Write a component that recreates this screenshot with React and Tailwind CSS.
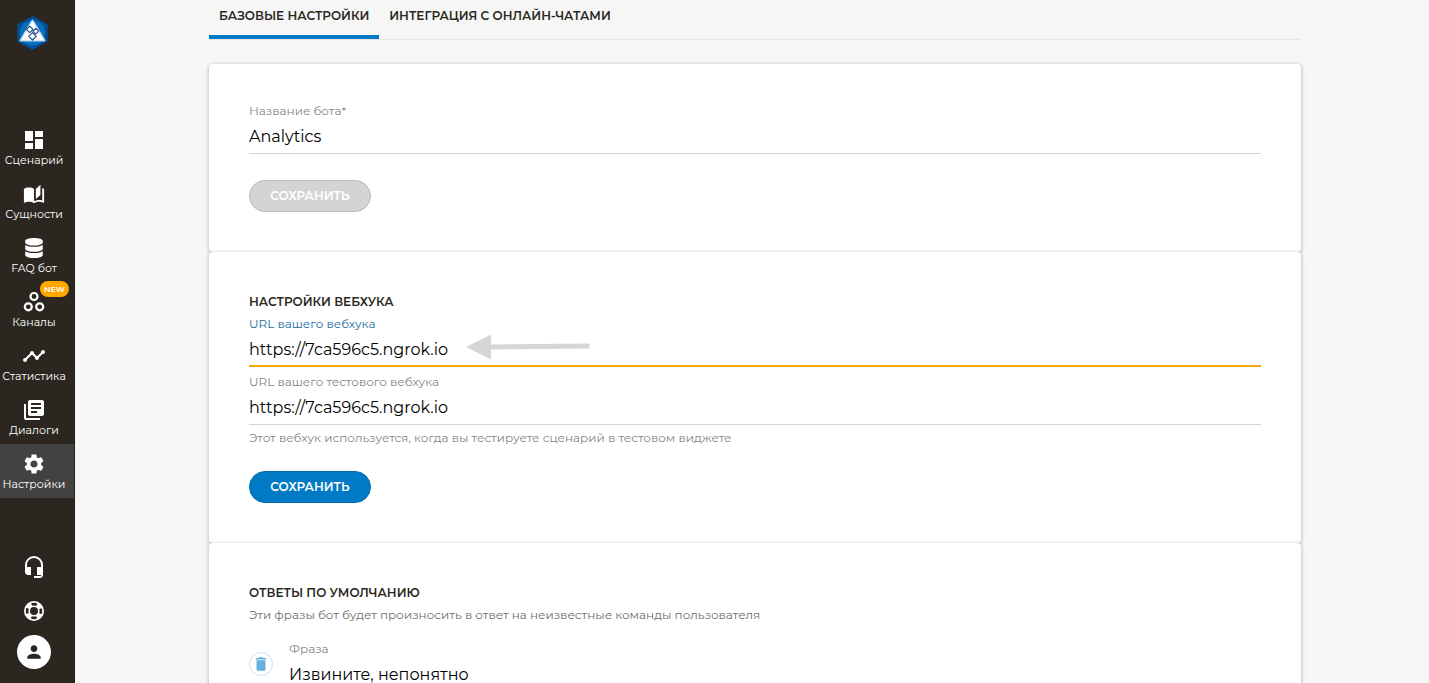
import React, { useState } from 'react'
import { FaDatabase } from 'react-icons/fa'
import {
  MdDashboard,
  MdDelete,
  MdHeadsetMic,
  MdLibraryBooks,
  MdPerson,
  MdSettings,
  MdTimeline
} from 'react-icons/md'

const BookIcon = () => (
  <svg viewBox="0 0 24 24" className="size-[22px]" fill="currentColor" aria-hidden="true">
    <path d="M19 2L14 6.5V17.5L19 13V2M6.5 5C4.55 5 2.45 5.4 1 6.5V21.16C1 21.41 1.25 21.66 1.5 21.66C1.6 21.66 1.65 21.59 1.75 21.59C3.1 20.94 5.05 20.5 6.5 20.5C8.45 20.5 10.55 20.9 12 22C13.35 21.15 15.8 20.5 17.5 20.5C19.15 20.5 20.85 20.81 22.25 21.56C22.35 21.61 22.4 21.59 22.5 21.59C22.75 21.59 23 21.34 23 21.09V6.5C22.4 6.05 21.75 5.75 21 5.5V19C19.9 18.65 18.7 18.5 17.5 18.5C15.8 18.5 13.35 19.15 12 20V6.5C10.55 5.4 8.45 5 6.5 5Z" />
  </svg>
)

const ChannelsIcon = () => (
  <svg viewBox="0 0 24 24" className="size-6" fill="none" stroke="currentColor" strokeWidth="2.2" aria-hidden="true">
    <circle cx="12" cy="6.5" r="3.5" />
    <circle cx="6.3" cy="16.8" r="3.5" />
    <circle cx="17.7" cy="16.8" r="3.5" />
  </svg>
)

const LifebuoyIcon = () => (
  <svg viewBox="0 0 24 24" className="size-6" aria-hidden="true">
    <circle cx="12" cy="12" r="7" fill="none" stroke="#fff" strokeWidth="6" />
    <circle cx="12" cy="12" r="6.9" fill="none" stroke="#2b2720" strokeWidth="2.6" strokeDasharray="5.4 5.439" strokeDashoffset="2.7" />
  </svg>
)

const Logo = () => (
  <svg viewBox="0 0 32 34" className="h-[34px] w-8" aria-hidden="true">
    <path d="M16.5 0L31.5 8.5V25.5L16.5 34L1.5 25.5V8.5Z" fill="#01509a" />
    <circle cx="16.5" cy="17" r="12.5" fill="#0a70bd" />
    <path d="M16.5 4.5L28.5 24.5H4.5Z" fill="#fff" stroke="#b5d8f2" strokeWidth="2" strokeLinejoin="round" />
    <path d="M16.5 5L28 24.3H5Z" fill="#fff" />
    <g fill="#fff" stroke="#24508c" strokeWidth="1.2" strokeLinejoin="round">
      <path d="M13.7 10.1L17 13.4L13.7 16.7L10.4 13.4Z" />
      <path d="M19.8 12.3L22.7 15.2L19.8 18.1L16.9 15.2Z" />
      <path d="M16.5 16.6L20.2 20.3L16.5 24L12.8 20.3Z" />
    </g>
  </svg>
)

const navItems = [
  { label: 'Сценарий', icon: <MdDashboard className="size-6" /> },
  { label: 'Сущности', icon: <BookIcon /> },
  { label: 'FAQ бот', icon: <FaDatabase className="size-5" /> },
  { label: 'Каналы', icon: <ChannelsIcon />, badge: 'NEW' },
  { label: 'Статистика', icon: <MdTimeline className="size-6" /> },
  { label: 'Диалоги', icon: <MdLibraryBooks className="size-6" /> },
  { label: 'Настройки', icon: <MdSettings className="size-6" />, active: true }
]

const Sidebar = () => (
  <aside className="flex w-[75px] shrink-0 flex-col border-r border-[#221e18] bg-[#2b2720] text-white">
    <a href="#home" aria-label="Главная" className="mt-4 mb-[70px] ml-4">
      <Logo />
    </a>
    <nav>
      {navItems.map((item) => (
        <a
          key={item.label}
          href="#nav"
          className={`relative flex h-[54px] flex-col items-center pt-2 pr-[6px] ${item.active ? 'bg-[#424242]' : ''}`}
        >
          <span className="flex h-6 items-center">{item.icon}</span>
          <span className="text-[11px] leading-4 whitespace-nowrap">{item.label}</span>
          {item.badge && (
            <span className="absolute top-[-1px] right-[5px] rounded-full bg-[#ffa800] px-1 text-[8px] leading-4 font-semibold">
              {item.badge}
            </span>
          )}
        </a>
      ))}
    </nav>
    <div className="mt-auto mb-[14px] flex flex-col items-center pr-[6px]">
      <button type="button" aria-label="Поддержка" className="mb-5">
        <MdHeadsetMic className="size-6" />
      </button>
      <button type="button" aria-label="Помощь" className="mb-3">
        <LifebuoyIcon />
      </button>
      <button
        type="button"
        aria-label="Профиль"
        className="flex size-[34px] items-center justify-center rounded-full bg-white text-[#2b2720]"
      >
        <MdPerson className="size-5" />
      </button>
    </div>
  </aside>
)

const Card = ({ children }) => (
  <section className="rounded-[4px] bg-white p-10 shadow-[0_1px_4px_rgba(0,0,0,0.3)]">{children}</section>
)

const CardTitle = ({ children }) => (
  <h2 className="mb-[5px] text-xs leading-5 font-semibold text-[#2b2720]">{children}</h2>
)

const Field = ({ id, label, value, onChange, active, children }) => (
  <div className="relative flex flex-1 flex-col">
    <label htmlFor={id} className={`text-xs leading-[14px] ${active ? 'text-[#1a6c9f]' : 'text-[#858585]'}`}>
      {label}
    </label>
    <input
      id={id}
      type="text"
      value={value}
      onChange={(e) => onChange(e.target.value)}
      className={`h-9 w-full bg-transparent pt-[2px] text-base text-black outline-none ${
        active ? 'border-b-2 border-[#f9a80c]' : 'border-b border-[#d4d4d4]'
      }`}
    />
    {children}
  </div>
)

const SaveButton = ({ disabled }) => (
  <button
    type="button"
    disabled={disabled}
    className={`mt-[26px] block h-8 w-[122px] rounded-full border text-xs font-semibold text-white ${
      disabled ? 'border-[#b9b9b7] bg-[#d4d4d2]' : 'border-[#026bae] bg-[#007ac5]'
    }`}
  >
    СОХРАНИТЬ
  </button>
)

const App = () => {
  const [name, setName] = useState('Analytics')
  const [webhook, setWebhook] = useState('https://7ca596c5.ngrok.io')
  const [testWebhook, setTestWebhook] = useState('https://7ca596c5.ngrok.io')
  const [phrase, setPhrase] = useState('Извините, непонятно')

  return (
    <div className="flex h-screen overflow-hidden bg-[#f6f6f6] font-['Montserrat','Inter',sans-serif]">
      <Sidebar />
      <main className="min-w-0 flex-1 overflow-hidden pl-[6px]">
        <div className="mx-auto w-full max-w-[1092px]">
          <div className="mb-6 flex border-b border-[#e6e6e6] text-xs font-semibold text-[#2b2720]">
            <button type="button" className="h-[39px] border-b-4 border-[#007ac5] px-[10px] pb-1">
              БАЗОВЫЕ НАСТРОЙКИ
            </button>
            <button type="button" className="h-[39px] border-b-4 border-transparent px-[10px] pb-1">
              ИНТЕГРАЦИЯ С ОНЛАЙН-ЧАТАМИ
            </button>
          </div>

          <Card>
            <Field id="bot-name" label="Название бота*" value={name} onChange={setName} />
            <SaveButton disabled />
          </Card>

          <Card>
            <CardTitle>НАСТРОЙКИ ВЕБХУКА</CardTitle>
            <div className="flex flex-col gap-2">
              <Field id="webhook" label="URL вашего вебхука" value={webhook} onChange={setWebhook} active>
                <svg
                  viewBox="0 0 124 26"
                  className="pointer-events-none absolute top-[17px] left-[217px] h-[26px] w-[124px]"
                  fill="#d6d6d6"
                  aria-hidden="true"
                >
                  <path d="M0 13L25 0.5V10.5L123.5 9.5V14.5L25 15.5V25.5Z" />
                </svg>
              </Field>
              <Field id="test-webhook" label="URL вашего тестового вебхука" value={testWebhook} onChange={setTestWebhook} />
            </div>
            <p className="mt-[6px] text-xs leading-[14px] text-[#858585]">
              Этот вебхук используется, когда вы тестируете сценарий в тестовом виджете
            </p>
            <SaveButton />
          </Card>

          <Card>
            <CardTitle>ОТВЕТЫ ПО УМОЛЧАНИЮ</CardTitle>
            <p className="text-xs leading-[14px] text-[#6d6d6d]">
              Эти фразы бот будет произносить в ответ на неизвестные команды пользователя
            </p>
            <div className="mt-5 flex items-start gap-4">
              <button
                type="button"
                aria-label="Удалить"
                className="mt-[10px] flex size-6 items-center justify-center rounded-full border border-[#c5e2f4] text-[#66b0de]"
              >
                <MdDelete className="size-[18px]" />
              </button>
              <Field id="phrase" label="Фраза" value={phrase} onChange={setPhrase} />
            </div>
          </Card>
        </div>
      </main>
    </div>
  )
}

export default App
